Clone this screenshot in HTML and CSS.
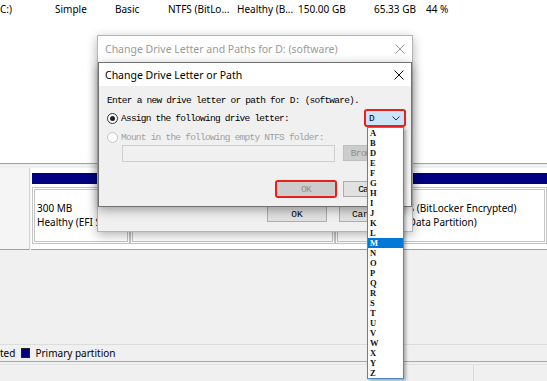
FILE: index.html
```html
<!DOCTYPE html>
<html lang="en">
<head>
    <meta charset="UTF-8">
    <title>Disk Management - Change Drive Letter</title>
    <link rel="stylesheet" href="styles.css">
</head>
<body>
<div class="screen">
    <div class="volumes">
        <div class="vol-row">
            <span>C:)</span>
            <span>Simple</span>
            <span>Basic</span>
            <span>NTFS (BitLo...</span>
            <span>Healthy (B...</span>
            <span>150.00 GB</span>
            <span>65.33 GB</span>
            <span>44 %</span>
        </div>
    </div>

    <div class="disks">
        <div class="disk-row">
            <div class="disk-label"></div>
            <div class="disk-map">
                <div class="disk-bar"></div>
                <div class="parts">
                    <div class="part part-efi">
                        <div>300 MB</div>
                        <div>Healthy (EFI System Partition)</div>
                    </div>
                    <div class="part part-mid"></div>
                    <div class="part part-data">
                        <div>150.00 GB NTFS (BitLocker Encrypted)</div>
                        <div>Healthy (Basic Data Partition)</div>
                    </div>
                </div>
            </div>
        </div>
    </div>

    <div class="blank"></div>

    <div class="legend">
        <span>ted</span>
        <span class="swatch"></span>
        <span>Primary partition</span>
    </div>

    <div class="status">
        <div class="status-main"></div>
        <div class="status-side"></div>
    </div>

    <!-- dialog behind -->
    <div class="dlg dlg-back">
        <div class="dlg-title">
            <span>Change Drive Letter and Paths for D: (software)</span>
            <svg class="close" width="10" height="10" viewBox="0 0 10 10"><path d="M0.5 0.5L9.5 9.5M9.5 0.5L0.5 9.5" stroke="#9a9a9a" stroke-width="1"/></svg>
        </div>
        <div class="dlg-back-body">
            <div class="btn-row back-btns">
                <span class="btn">OK</span>
                <span class="btn">Cancel</span>
            </div>
        </div>
    </div>

    <!-- active dialog -->
    <div class="dlg dlg-front">
        <div class="dlg-title">
            <span>Change Drive Letter or Path</span>
            <svg class="close" width="10" height="10" viewBox="0 0 10 10"><path d="M0.5 0.5L9.5 9.5M9.5 0.5L0.5 9.5" stroke="#111" stroke-width="1"/></svg>
        </div>
        <div class="dlg-body">
            <div class="sim intro">Enter a new drive letter or path for D: (software).</div>
            <div class="opt-row">
                <span class="radio checked"></span>
                <span class="sim">Assign the following drive letter:</span>
                <div class="combo">
                    <span class="sim">D</span>
                    <svg width="8" height="5" viewBox="0 0 8 5"><path d="M0.5 0.5L4 4L7.5 0.5" fill="none" stroke="#333" stroke-width="1"/></svg>
                </div>
            </div>
            <div class="opt-row opt-off">
                <span class="radio"></span>
                <span class="sim">Mount in the following empty NTFS folder:</span>
            </div>
            <div class="field-row">
                <div class="field"></div>
                <span class="btn btn-off sim">Browse...</span>
            </div>
            <div class="btn-row front-btns">
                <span class="mark"><span class="btn btn-off sim">OK</span></span>
                <span class="btn sim">Cancel</span>
            </div>
        </div>
    </div>

    <ul class="letters">
        <li>A</li><li>B</li><li>D</li><li>E</li><li>F</li><li>G</li><li>H</li><li>I</li><li>J</li>
        <li>K</li><li>L</li><li class="sel">M</li><li>N</li><li>O</li><li>P</li><li>Q</li><li>R</li>
        <li>S</li><li>T</li><li>U</li><li>V</li><li>W</li><li>X</li><li>Y</li><li>Z</li>
    </ul>
</div>
</body>
</html>
```

FILE: styles.css
```css
body {
    margin: 0;
    font-family: "Noto Sans", "Open Sans", sans-serif;
    font-size: 10px;
    color: #000;
    background-color: #f0f0f0;
}
.screen {
    position: relative;
    width: 547px;
    height: 381px;
    overflow: hidden;
    display: flex;
    flex-direction: column;
}
.volumes {
    flex: none;
    height: 163px;
    background-color: #fff;
    border-bottom: 1px solid #a0a0a0;
}
.vol-row {
    display: grid;
    grid-template-columns: 55px 60px 53px 69px 61px 76px 52px auto;
    height: 18px;
    align-items: center;
    white-space: nowrap;
}
.disks {
    flex: none;
    height: 86px;
    padding-top: 4px;
    box-sizing: border-box;
}
.disk-row {
    display: flex;
    height: 82px;
}
.disk-label {
    width: 30px;
    background-color: #f5f5f5;
    border-right: 1px solid #d6d6d6;
    border-bottom: 1px solid #a0a0a0;
    box-sizing: border-box;
}
.disk-map {
    flex: 1;
    margin-left: 1px;
    padding: 5px 0 0 1px;
    background-color: #fff;
    border-bottom: 1px solid #a0a0a0;
}
.disk-bar {
    height: 11px;
    background-color: #000080;
}
.parts {
    display: flex;
    height: 57px;
    margin-top: 3px;
}
.part {
    box-sizing: border-box;
    border: 3px double #c4c4c4;
    padding: 11px 0 0 2px;
    white-space: nowrap;
    overflow: hidden;
    line-height: 14px;
}
.part-efi {
    width: 98px;
}
.part-mid {
    width: 205px;
}
.part-data {
    flex: 1;
}
.blank {
    flex: 1;
}
.legend {
    flex: none;
    height: 16px;
    border-top: 1px solid #dcdcdc;
    display: flex;
    align-items: center;
    white-space: nowrap;
}
.swatch {
    width: 7px;
    height: 8px;
    margin: 0 5px 0 6px;
    background-color: #000080;
    border: 1px solid #222;
}
.status {
    flex: none;
    height: 17px;
    border-top: 1px solid #a8a8a8;
    display: flex;
    padding-top: 2px;
}
.status-main {
    width: 473px;
    border-top: 1px solid #e2e2e2;
    border-right: 1px solid #dadada;
}
.status-side {
    flex: 1;
    border-top: 1px solid #e2e2e2;
}

/* dialogs */
.dlg {
    position: absolute;
    box-sizing: border-box;
    display: flex;
    flex-direction: column;
    background-color: #f0f0f0;
}
.dlg-title {
    display: flex;
    align-items: center;
    background-color: #fff;
    white-space: nowrap;
    font-size: 10.5px;
}
.close {
    margin-left: auto;
}
.dlg-back {
    left: 97px;
    top: 35px;
    width: 316px;
    height: 197px;
    border: 1px solid #b4b4b4;
    box-shadow: 0 3px 10px rgba(0, 0, 0, 0.3);
}
.dlg-back .dlg-title {
    height: 26px;
    padding: 0 7px 0 7px;
    color: #9a9a9a;
}
.dlg-back-body {
    flex: 1;
    display: flex;
    flex-direction: column;
    justify-content: flex-end;
    padding-bottom: 9px;
}
.dlg-front {
    left: 98px;
    top: 62px;
    width: 314px;
    height: 145px;
    border: 1px solid #707070;
    box-shadow: 0 3px 10px rgba(0, 0, 0, 0.35);
}
.dlg-front .dlg-title {
    height: 23px;
    padding: 0 7px 0 6px;
}
.dlg-body {
    flex: 1;
    padding: 8px 5px 0 8px;
    display: flex;
    flex-direction: column;
}
.sim {
    font-family: "Liberation Mono", monospace;
    font-size: 9.5px;
    letter-spacing: -0.76px;
    white-space: nowrap;
}
.intro {
    height: 13px;
    line-height: 13px;
}
.opt-row {
    display: flex;
    align-items: center;
    height: 18px;
    margin-top: 2px;
}
.opt-off {
    height: 12px;
    margin-top: 4px;
    color: #a0a0a0;
}
.radio {
    width: 9px;
    height: 9px;
    margin-right: 3px;
    border: 1px solid #333;
    border-radius: 50%;
    background-color: #fff;
    display: flex;
    align-items: center;
    justify-content: center;
}
.radio.checked::after {
    content: "";
    width: 5px;
    height: 5px;
    border-radius: 50%;
    background-color: #222;
}
.opt-off .radio {
    border-color: #c4c4c4;
}
.combo {
    margin-left: auto;
    width: 42px;
    height: 18px;
    box-sizing: border-box;
    border: 2px solid #e8201a;
    border-radius: 3px;
    background-color: #cce4f7;
    display: flex;
    align-items: center;
    justify-content: space-between;
    padding: 0 4px 0 3px;
}
.field-row {
    display: flex;
    height: 17px;
    margin-top: 2px;
    padding-left: 15px;
    gap: 8px;
}
.field {
    width: 213px;
    box-sizing: border-box;
    border: 1px solid #cfcfcf;
    background-color: #f0f0f0;
}
.btn {
    box-sizing: border-box;
    width: 60px;
    height: 16px;
    display: flex;
    align-items: center;
    justify-content: center;
    background-color: #e1e1e1;
    border: 1px solid #adadad;
    font-family: "Liberation Mono", monospace;
    font-size: 9.5px;
}
.btn-off {
    color: #8f8f8f;
    background-color: #cccccc;
    border-color: #bfbfbf;
}
.btn-row {
    display: flex;
    align-items: center;
}
.back-btns {
    padding-left: 169px;
    gap: 12px;
}
.front-btns {
    margin-top: 18px;
    height: 18px;
    padding-left: 168px;
    gap: 6px;
}
.mark {
    border: 2px solid #e8201a;
    border-radius: 3px;
}
.mark .btn {
    width: 58px;
    height: 14px;
    border: none;
}

/* open drop-down list */
.letters {
    position: absolute;
    left: 367px;
    top: 127px;
    width: 37px;
    margin: 0;
    padding: 0;
    list-style-type: none;
    box-sizing: border-box;
    border: 1px solid #4a8ac4;
    background-color: #fff;
    box-shadow: 2px 2px 3px rgba(0, 0, 0, 0.3);
}
.letters li {
    height: 10px;
    line-height: 10px;
    padding-left: 2px;
    font-family: "Liberation Serif", serif;
    font-weight: bold;
    font-size: 8.5px;
    color: #111;
}
.letters li.sel {
    background-color: #0078d7;
    color: #fff;
}
```
